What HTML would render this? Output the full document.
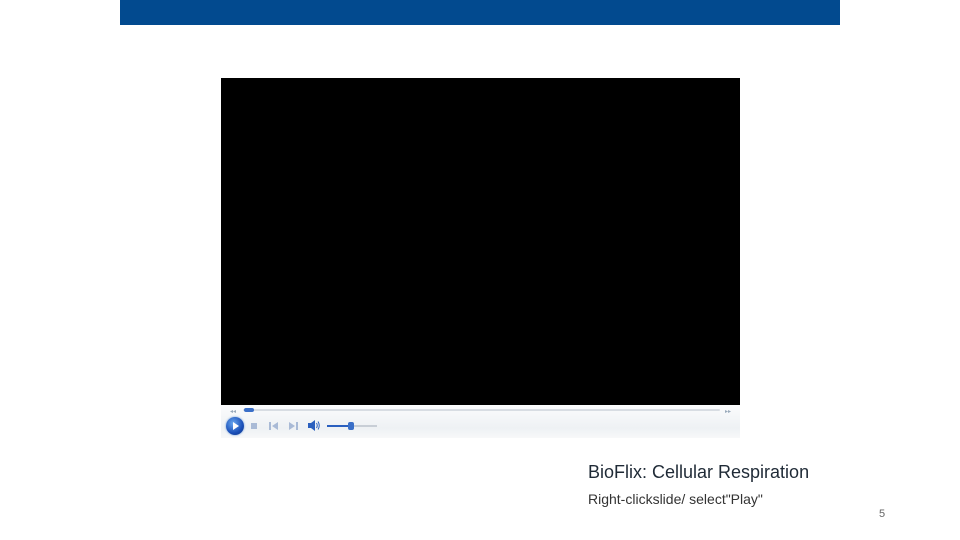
<!DOCTYPE html>
<html><head><meta charset="utf-8"><style>
body{margin:0;width:960px;height:540px;background:#fff;position:relative;overflow:hidden;font-family:"Liberation Sans",sans-serif}
.bar{position:absolute;left:120px;top:0;width:720px;height:25px;background:#024a8f}
.vid{position:absolute;left:221px;top:78px;width:519px;height:327px;background:#000}
.ctl{position:absolute;left:221px;top:405px;width:519px;height:33px;background:linear-gradient(#fbfcfd,#eef1f4 70%,#f7f8f9)}
.ab{position:absolute}
</style></head><body>
<div class="bar"></div>
<div class="vid"></div>
<div class="ctl">
 <div class="ab" style="left:22px;top:4px;width:477px;height:2px;background:#d8dde3;border-radius:1px"></div>
 <div class="ab" style="left:9px;top:3px;font-size:6px;color:#9ab">◂◂</div>
 <div class="ab" style="left:504px;top:3px;font-size:6px;color:#9ab">▸▸</div>
 <div class="ab" style="left:23px;top:3px;width:10px;height:4px;background:#3a6fc8;border-radius:2px"></div>
 <div class="ab" style="left:5px;top:12px;width:18px;height:18px;border-radius:50%;background:radial-gradient(circle at 40% 35%,#6aa8f0,#1a4fb8 60%,#0b2f80);box-shadow:0 0 2px #6a9ad8"></div>
 <svg class="ab" style="left:11px;top:17px" width="8" height="8"><path d="M1 0L7 4L1 8Z" fill="#fff"/></svg>
 <div class="ab" style="left:30px;top:18px;width:6px;height:6px;background:#a9bad6"></div>
 <svg class="ab" style="left:48px;top:17px" width="10" height="8"><rect x="0" y="0" width="2" height="8" fill="#a9bad6"/><path d="M9 0L3 4L9 8Z" fill="#a9bad6"/></svg>
 <svg class="ab" style="left:68px;top:17px" width="10" height="8"><path d="M0 0L6 4L0 8Z" fill="#a9bad6"/><rect x="7" y="0" width="2" height="8" fill="#a9bad6"/></svg>
 <svg class="ab" style="left:87px;top:15px" width="12" height="11"><path d="M0 3H3L7 0V11L3 8H0Z" fill="#2a5fbf"/><path d="M8.5 3Q10 5.5 8.5 8M10 1.5Q12.5 5.5 10 9.5" stroke="#2a5fbf" fill="none"/></svg>
 <div class="ab" style="left:106px;top:20px;width:50px;height:2px;background:#c8ced6"></div>
 <div class="ab" style="left:106px;top:20px;width:26px;height:2px;background:#2a5fbf"></div>
 <div class="ab" style="left:127px;top:17px;width:6px;height:8px;background:#3a6fc8;border-radius:2px"></div>
</div>
<div class="ab" style="left:588px;top:462px;font-size:18px;color:#1f2a36">BioFlix: Cellular Respiration</div>
<div class="ab" style="left:588px;top:491px;font-size:14px;color:#333">Right-clickslide/ select"Play"</div>
<div class="ab" style="left:879px;top:508px;font-size:11px;color:#666">5</div>
</body></html>
